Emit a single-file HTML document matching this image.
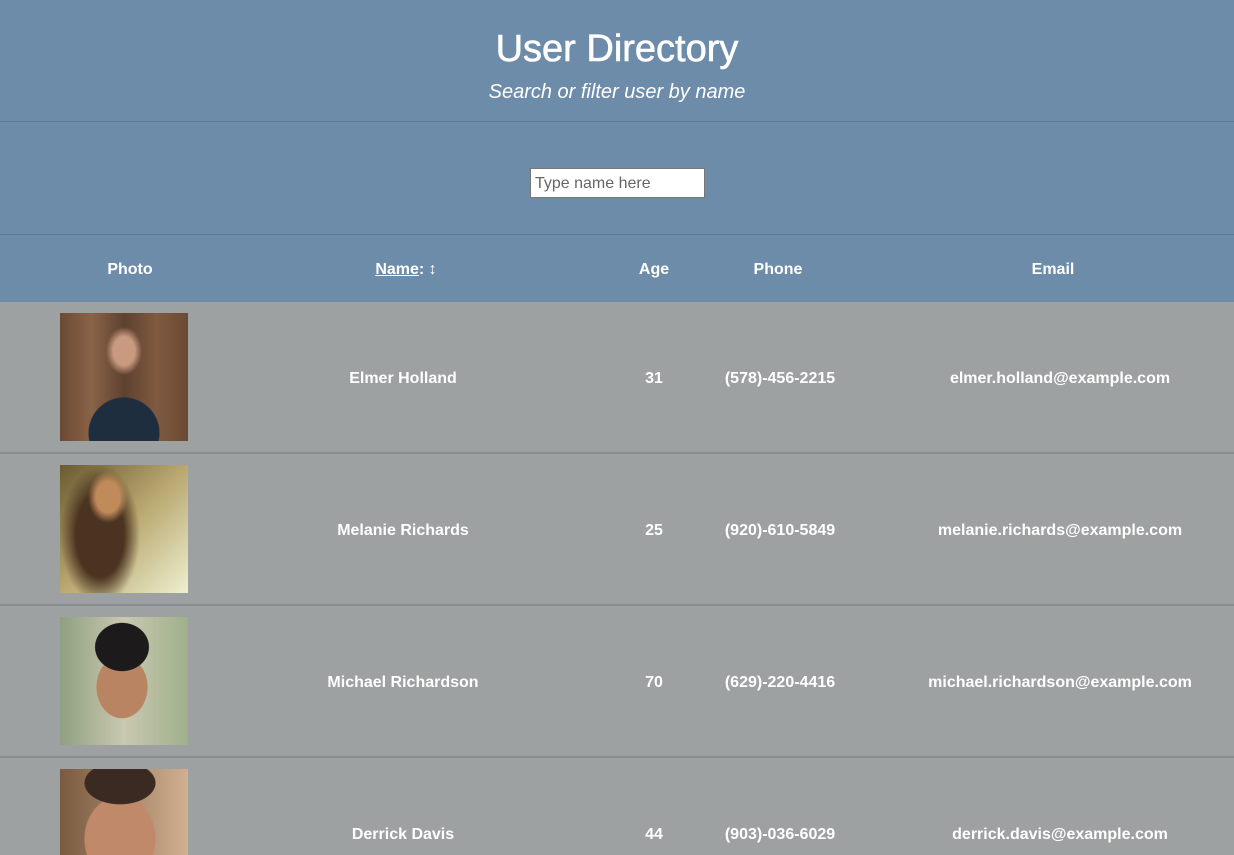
<!DOCTYPE html>
<html style="width:1234px;height:855px;overflow:hidden"><head><meta charset="utf-8"><style>
*{margin:0;padding:0;box-sizing:border-box}
body{width:1234px;height:855px;overflow:hidden;background:#9da1a1;font-family:"Liberation Sans",Arial,sans-serif;color:#fff;position:relative}
.hdr{position:absolute;left:0;top:0;width:1234px;height:302px;background:#6d8ca9}
.h1{position:absolute;top:28px;width:100%;text-align:center;font-size:38px;font-weight:400;-webkit-text-stroke:0.6px #fff}
.sub{position:absolute;top:81px;width:100%;text-align:center;font-size:20px;font-style:italic}
.ln{position:absolute;left:0;width:1234px;height:1px;background:#5d7891}
.inp{position:absolute;left:530px;top:168px;width:175px;height:30px;background:#fff;border:1px solid #777;color:#666;font-size:16px;padding:6px 4px;line-height:18px}
.c{position:absolute;transform:translateX(-50%);font-weight:700;font-size:16px;white-space:nowrap}
.sep{position:absolute;left:0;width:1234px;height:2px;background:#878c8e}
.ph{position:absolute;left:60px;width:128px;height:128px}
</style></head><body>
<div class="hdr">
<div class="h1">User Directory</div>
<div class="sub">Search or filter user by name</div>
<div class="ln" style="top:121px"></div>
<div class="inp">Type name here</div>
<div class="ln" style="top:234px"></div>
<div class="c" style="left:130px;top:261px">Photo</div>
<div class="c" style="left:406px;top:261px"><u>Name</u>: ↕</div>
<div class="c" style="left:654px;top:261px">Age</div>
<div class="c" style="left:778px;top:261px">Phone</div>
<div class="c" style="left:1053px;top:261px">Email</div>
</div>

<div class="ph" style="top:313px;background:radial-gradient(ellipse 18px 24px at 64px 38px,#c99a80 60%,transparent 100%),radial-gradient(ellipse 50px 50px at 64px 120px,#1f2e3f 70%,transparent 72%),linear-gradient(90deg,#6b4a35,#8a6347,#5e4130,#7f5a40,#6a4a34)"></div>
<div class="c" style="left:403px;top:370px">Elmer Holland</div>
<div class="c" style="left:654px;top:370px">31</div>
<div class="c" style="left:780px;top:370px">(578)-456-2215</div>
<div class="c" style="left:1060px;top:370px">elmer.holland@example.com</div>
<div class="sep" style="top:452px"></div>

<div class="ph" style="top:465px;background:radial-gradient(ellipse 20px 26px at 48px 32px,#c08a5a 60%,transparent 100%),radial-gradient(ellipse 40px 70px at 40px 70px,#4a3320 60%,transparent 100%),linear-gradient(135deg,#6a5a30,#b9a870 50%,#eef0d0)"></div>
<div class="c" style="left:403px;top:522px">Melanie Richards</div>
<div class="c" style="left:654px;top:522px">25</div>
<div class="c" style="left:780px;top:522px">(920)-610-5849</div>
<div class="c" style="left:1060px;top:522px">melanie.richards@example.com</div>
<div class="sep" style="top:604px"></div>

<div class="ph" style="top:617px;background:radial-gradient(ellipse 38px 34px at 62px 30px,#1c1a1a 70%,transparent 72%),radial-gradient(ellipse 36px 44px at 62px 70px,#b88462 70%,transparent 72%),linear-gradient(90deg,#8fa080,#c9c8b0,#9fb08a)"></div>
<div class="c" style="left:403px;top:674px">Michael Richardson</div>
<div class="c" style="left:654px;top:674px">70</div>
<div class="c" style="left:780px;top:674px">(629)-220-4416</div>
<div class="c" style="left:1060px;top:674px">michael.richardson@example.com</div>
<div class="sep" style="top:756px"></div>

<div class="ph" style="top:769px;background:radial-gradient(ellipse 50px 30px at 60px 14px,#3a2a22 70%,transparent 72%),radial-gradient(ellipse 50px 60px at 60px 70px,#c08a6a 70%,transparent 72%),linear-gradient(90deg,#7a5a40,#d0b090)"></div>
<div class="c" style="left:403px;top:826px">Derrick Davis</div>
<div class="c" style="left:654px;top:826px">44</div>
<div class="c" style="left:780px;top:826px">(903)-036-6029</div>
<div class="c" style="left:1060px;top:826px">derrick.davis@example.com</div>
</body></html>
